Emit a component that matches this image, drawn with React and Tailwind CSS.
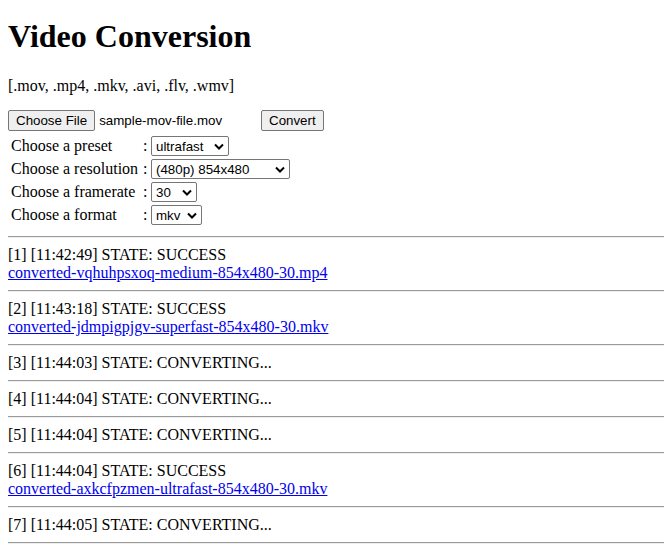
import React from "react";

function Chevron() {
  return (
    <svg width="10" height="7" viewBox="0 0 10 7" className="shrink-0">
      <path d="M1 1.5 L5 5.5 L9 1.5" fill="none" stroke="#000" strokeWidth="2" />
    </svg>
  );
}

function FakeSelect({ value, width }) {
  return (
    <div
      className="flex items-center justify-between h-[20px] border border-[#767676] rounded-[2px] bg-white pl-[4px] pr-[4px] font-['Liberation_Sans',sans-serif] text-[13.33px] leading-[15px] text-black"
      style={{ width }}
    >
      <span className="whitespace-nowrap">{value}</span>
      <Chevron />
    </div>
  );
}

function Btn({ children }) {
  return (
    <span className="inline-flex items-center h-[21px] px-[7px] border border-[#767676] rounded-[2px] bg-[#efefef] font-['Liberation_Sans',sans-serif] text-[13.33px] leading-[15px] text-black">
      {children}
    </span>
  );
}

function Hr() {
  return <div className="h-0 w-[656px] my-[8px] border-t border-t-[#9a9a9a] border-b border-b-[#eeeeee]" />;
}

const rows = [
  ["Choose a preset", "ultrafast", 78],
  ["Choose a resolution", "(480p) 854x480", 139],
  ["Choose a framerate", "30", 46],
  ["Choose a format", "mkv", 51],
];

const entries = [
  ["[1] [11:42:49] STATE: SUCCESS", "converted-vqhuhpsxoq-medium-854x480-30.mp4"],
  ["[2] [11:43:18] STATE: SUCCESS", "converted-jdmpigpjgv-superfast-854x480-30.mkv"],
  ["[3] [11:44:03] STATE: CONVERTING...", null],
  ["[4] [11:44:04] STATE: CONVERTING...", null],
  ["[5] [11:44:04] STATE: CONVERTING...", null],
  ["[6] [11:44:04] STATE: SUCCESS", "converted-axkcfpzmen-ultrafast-854x480-30.mkv"],
  ["[7] [11:44:05] STATE: CONVERTING...", null],
];

export default function App() {
  return (
    <div className="bg-white min-h-[552px] px-[8px] font-['Liberation_Serif',serif] text-[16px] leading-[normal] text-black">
      <h1 className="pt-[18px] mb-[22px] text-[32px] font-bold leading-[normal]">Video Conversion</h1>
      <p className="mb-[15px]">[.mov, .mp4, .mkv, .avi, .flv, .wmv]</p>
      <div className="flex items-center h-[21px]">
        <div className="flex items-center w-[253px]">
          <Btn>Choose File</Btn>
          <span className="ml-[4px] font-['Liberation_Sans',sans-serif] text-[13.33px] leading-[15px]">sample-mov-file.mov</span>
        </div>
        <Btn>Convert</Btn>
      </div>
      <div className="grid grid-cols-[128px_4px_auto] gap-x-[4px] gap-y-[3px] pl-[3px] pt-[5px] pb-[3px] items-center">
        {rows.map(([label, value, w]) => (
          <React.Fragment key={label}>
            <span className="whitespace-nowrap">{label}</span>
            <span>:</span>
            <FakeSelect value={value} width={w} />
          </React.Fragment>
        ))}
      </div>
      {entries.map(([text, link], i) => (
        <div key={i}>
          <Hr />
          <div>{text}</div>
          {link && (
            <div>
              <a className="text-[#0000ee] underline">{link}</a>
            </div>
          )}
        </div>
      ))}
      <Hr />
    </div>
  );
}
